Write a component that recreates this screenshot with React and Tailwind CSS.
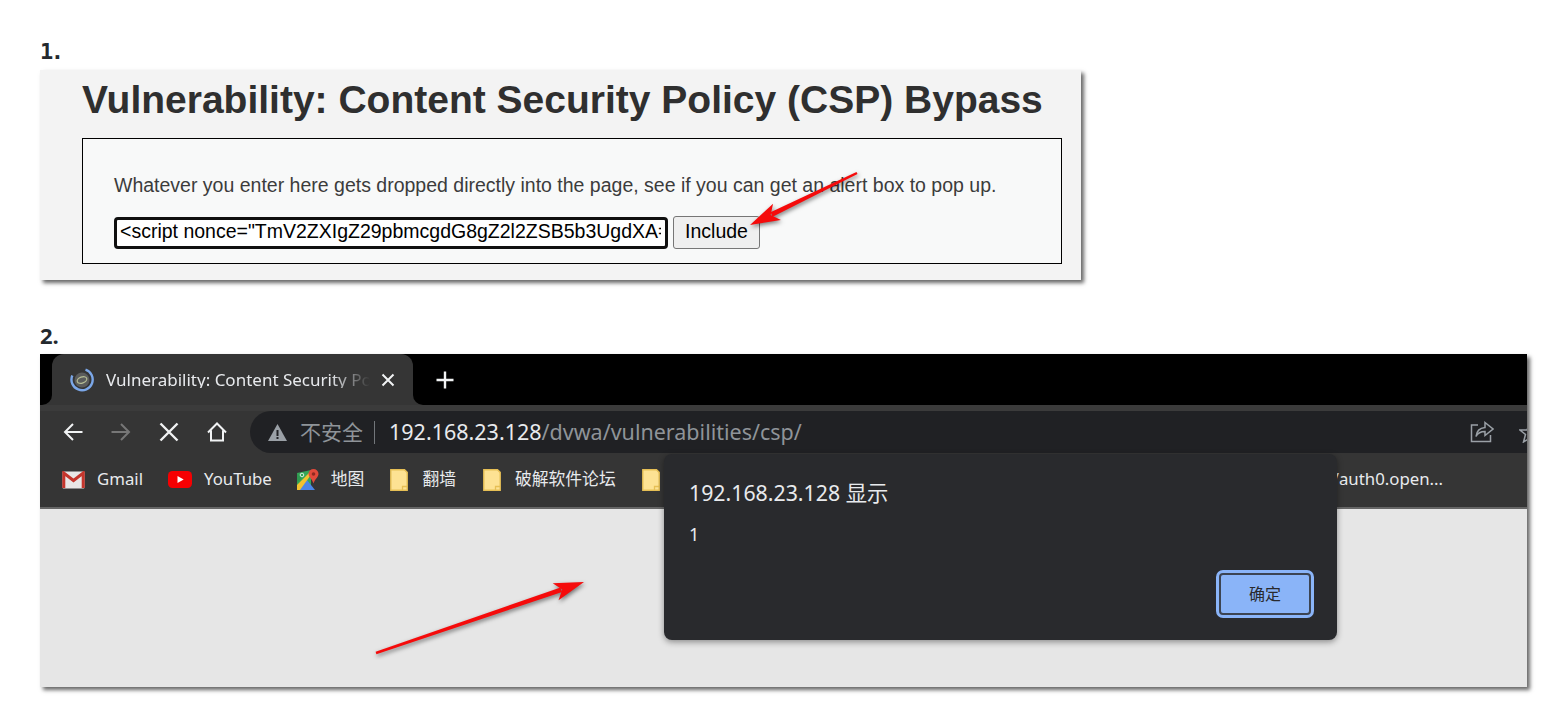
const CJK = "font-['Noto_Sans','Noto_Sans_CJK_SC',sans-serif]";

function Folder() {
  return (
    <svg width="18" height="22" viewBox="0 0 18 22" className="shrink-0">
      <path d="M.8 .8h13.700l2.700 2.600v17.800H.8z" fill="#fde293" stroke="#e6bf55" strokeWidth="1.400" />
      <path d="M12.500 21v-3.500h4.500" fill="none" stroke="#e6bf55" strokeWidth="1.300" />
    </svg>
  );
}

function Gmail() {
  return (
    <svg width="23" height="18" viewBox="0 0 23 18" className="shrink-0">
      <rect x="0.5" y="0.5" width="22" height="17" rx="1" fill="#e8e6e6" />
      <path d="M1.800 17V2l9.700 7.500L21.200 2v15" fill="none" stroke="#c5352c" strokeWidth="3" />
    </svg>
  );
}

function YouTube() {
  return (
    <svg width="24" height="17" viewBox="0 0 24 17" className="shrink-0">
      <rect width="24" height="17" rx="4.500" fill="#f60002" />
      <path d="M9.500 5l6.200 3.500-6.200 3.500z" fill="#fff" />
    </svg>
  );
}

function Maps() {
  return (
    <svg width="22" height="22" viewBox="0 0 22 22" className="shrink-0">
      <path d="M0 4l14-3v20H0z" fill="#36a558" />
      <path d="M0 21l10-10 8 10z" fill="#4b86e8" />
      <path d="M0 16L13 3h3L3 21H0z" fill="#f2c230" />
      <path d="M0 4l5 5-5 5z" fill="#2f9a50" />
      <circle cx="5" cy="6" r="1.800" fill="none" stroke="#d9efe0" strokeWidth="1" />
      <path d="M16.500 0a5 5 0 0 1 5 5c0 3-3.600 5-5 9.500C15.200 10 11.500 8 11.500 5a5 5 0 0 1 5-5z" fill="#e04a3b" />
      <circle cx="16.500" cy="5" r="1.800" fill="#8f2a22" />
    </svg>
  );
}

function Favicon() {
  return (
    <svg width="24" height="24" viewBox="0 0 24 24" className="shrink-0">
      <circle cx="12" cy="12" r="7.500" fill="#5b5c5c" />
      <ellipse cx="12" cy="12" rx="5" ry="3" fill="none" stroke="#b6bd94" strokeWidth="1.200" transform="rotate(-20 12 12)" />
      <path d="M15.500 1.600A10.600 10.600 0 1 1 2.300 7.500" fill="none" stroke="#7ba7e8" strokeWidth="2.400" />
    </svg>
  );
}

function Bookmark({ icon, label, gap = "gap-[12px]", className = "" }) {
  return (
    <div className={`flex items-center ${gap} ${className}`}>
      {icon}
      <span className="text-[16.800px] leading-none text-[#e8eaed] whitespace-nowrap">{label}</span>
    </div>
  );
}

function Arrow({ className, width, height, from, to }) {
  const dx = to[0] - from[0];
  const dy = to[1] - from[1];
  const l = Math.hypot(dx, dy);
  const ux = dx / l;
  const uy = dy / l;
  const bx = to[0] - ux * 30;
  const by = to[1] - uy * 30;
  const head = `${to[0]},${to[1]} ${bx - uy * 9},${by + ux * 9} ${to[0] - ux * 23},${to[1] - uy * 23} ${bx + uy * 9},${by - ux * 9}`;
  const tail = `${from[0] - uy * 1.200},${from[1] + ux * 1.200} ${to[0] - ux * 24 - uy * 2.400},${to[1] - uy * 24 + ux * 2.400} ${to[0] - ux * 24 + uy * 2.400},${to[1] - uy * 24 - ux * 2.400} ${from[0] + uy * 1.200},${from[1] - ux * 1.200}`;
  return (
    <svg width={width} height={height} className={`absolute pointer-events-none ${className}`}>
      <g className="drop-shadow-[1px_2px_2px_rgba(0,0,0,0.5)]">
        <polygon points={tail} fill="#f50b0b" />
        <polygon points={head} fill="#f50b0b" />
      </g>
    </svg>
  );
}

export default function App() {
  return (
    <div className="relative h-[728px] w-[1567px] overflow-hidden bg-white pl-10 pt-[40px]">
      <div className="h-[30px] font-['DejaVu_Sans_Mono',monospace] text-[22px] font-bold leading-[24px] tracking-[-2.500px] text-[#24292e]">1.</div>

      <section className="relative h-[210px] w-[1041px] bg-[#f3f3f3] pl-[42px] pt-[6px] shadow-[3px_3px_4px_rgba(0,0,0,0.6)] font-['Liberation_Sans',sans-serif]">
        <h1 className="h-[62px] text-[39px] font-bold leading-[48px] text-[#2f2f2f] whitespace-nowrap">
          Vulnerability: Content Security Policy (CSP) Bypass
        </h1>
        <div className="h-[126px] w-[980px] border border-black bg-[#f8f9f9] pl-[31px] pt-[33px]">
          <p className="text-[19.500px] leading-[26px] text-[#3c3c3c] whitespace-nowrap">
            Whatever you enter here gets dropped directly into the page, see if you can get an alert box to pop up.
          </p>
          <div className="mt-[18px] flex items-start gap-[5px]">
            <div className="mt-[1px] h-[32px] w-[554px] rounded-[4px] border-[3px] border-[#101010] bg-white pl-[3px] pr-[4px]">
              <div className="overflow-hidden whitespace-nowrap text-[19.500px] leading-[23px] text-black">
                {'<script nonce="TmV2ZXIgZ29pbmcgdG8gZ2l2ZSB5b3UgdXA=">alert(1)</script>'}
              </div>
            </div>
            <button className="h-[33px] w-[87px] rounded-[3px] border border-[#767676] bg-[#efefef] pb-[3px] text-[19.500px] leading-[26px] text-black">
              Include
            </button>
          </div>
        </div>
      </section>

      <div className="mt-[42px] h-[32px] font-['Open_Sans',sans-serif] text-[22px] font-bold leading-[26px] text-[#24292e]">2.</div>

      <section className={`relative h-[333px] w-[1487px] overflow-hidden bg-[#e6e6e6] shadow-[3px_3px_4px_rgba(0,0,0,0.6)] ${CJK}`}>
        <div className="flex h-[51px] bg-[#353535]">
          <div className="w-3 rounded-br-[10px] bg-black" />
          <div className="bg-black">
            <div className="flex h-[51px] w-[361px] items-center rounded-t-[12px] bg-[#353535] pl-[18px] pr-[16px]">
              <Favicon />
              <span className="ml-[12px] w-[264px] overflow-hidden whitespace-nowrap text-[17px] leading-none text-[#e8eaed] [mask-image:linear-gradient(to_right,black_85%,transparent)]">
                Vulnerability: Content Security Policy (CSP) Bypass
              </span>
              <svg width="14" height="14" viewBox="0 0 14 14" className="ml-[11px] shrink-0">
                <path d="M1.500 1.500l11 11M12.500 1.500l-11 11" stroke="#f1f3f4" strokeWidth="2" />
              </svg>
            </div>
          </div>
          <div className="flex flex-1 items-center rounded-bl-[10px] bg-black pl-[23px]">
            <svg width="18" height="18" viewBox="0 0 18 18">
              <path d="M9 .500v17M.500 9h17" stroke="#f1f3f4" strokeWidth="2.400" />
            </svg>
          </div>
        </div>

        <div className="h-[6px] bg-[#3b3b3b]" />
        <div className="flex h-[42px] bg-[#353535]">
          <div className="flex w-[210px] shrink-0 items-center pl-[23px]">
            <svg width="20" height="20" viewBox="0 0 20 20">
              <path d="M19.500 10H2M10 2l-8 8 8 8" fill="none" stroke="#f1f3f4" strokeWidth="2" />
            </svg>
            <svg width="20" height="20" viewBox="0 0 20 20" className="ml-[28px]">
              <path d="M.500 10H18M10 2l8 8-8 8" fill="none" stroke="#777" strokeWidth="2" />
            </svg>
            <svg width="20" height="20" viewBox="0 0 20 20" className="ml-[28px]">
              <path d="M1.500 1.500l17 17M18.500 1.500l-17 17" stroke="#f1f3f4" strokeWidth="2.400" />
            </svg>
            <svg width="20" height="20" viewBox="0 0 20 20" className="ml-[28px]">
              <path d="M1 10.500L10 1.500l9 9M4 8.500V18.500h12V8.500" fill="none" stroke="#f1f3f4" strokeWidth="2" />
            </svg>
          </div>
          <div className="flex h-[42px] flex-1 items-center rounded-l-[21px] bg-[#202124] pl-[18px]">
            <svg width="19" height="17" viewBox="0 0 19 17" className="shrink-0">
              <path d="M9.500 0L19 17H0z" fill="#9aa0a6" />
              <path d="M8.500 6h2v6h-2zM8.500 13h2v2h-2z" fill="#202124" />
            </svg>
            <span className="ml-[13px] text-[21px] leading-none text-[#8f9499]">不安全</span>
            <span className="ml-[11px] h-[23px] w-px bg-[#72767a]" />
            <span className="ml-[14px] text-[21.500px] leading-none text-[#e8eaed] whitespace-nowrap">
              192.168.23.128<span className="text-[#8f9499]">/dvwa/vulnerabilities/csp/</span>
            </span>
            <svg width="24" height="22" viewBox="0 0 24 22" className="ml-auto mr-[1px] shrink-0">
              <path d="M8 4H1.500v16.500h19V14" fill="none" stroke="#9aa0a6" strokeWidth="1.500" />
              <path d="M15 1.500l8 6.500-8 6.500v-4c-4 0-7 1-9 5 .5-5 3.500-8.500 9-9z" fill="none" stroke="#9aa0a6" strokeWidth="1.500" />
            </svg>
            <svg width="22" height="22" viewBox="0 0 22 22" className="ml-[24px] mr-[-14px] shrink-0">
              <path d="M11 2l3 7h7l-5.500 4.500 2 7.500L11 17l-6.500 4 2-7.500L1 9h7z" fill="none" stroke="#9aa0a6" strokeWidth="1.500" />
            </svg>
          </div>
        </div>

        <div className="flex h-[54px] items-center bg-[#353535] pb-[1px] pl-[22px]">
          <Bookmark icon={<Gmail />} label="Gmail" />
          <Bookmark icon={<YouTube />} label="YouTube" className="ml-[25px]" />
          <Bookmark icon={<Maps />} label="地图" className="ml-[25px]" />
          <Bookmark icon={<Folder />} label="翻墙" gap="gap-[14px]" className="ml-[26px]" />
          <Bookmark icon={<Folder />} label="破解软件论坛" gap="gap-[14px]" className="ml-[27px]" />
          <div className="ml-[26px]"><Folder /></div>
          <span className="ml-[673px] whitespace-nowrap text-[16.800px] leading-none text-[#e8eaed]">/auth0.open...</span>
        </div>
        <div className="h-[2px] bg-[#666]" />

        <div className="absolute left-[624px] top-[100px] h-[186px] w-[673px] rounded-[8px] bg-[#292a2d] pl-[25px] pr-[23px] pt-[27px] shadow-[0_2px_6px_rgba(0,0,0,0.4)]">
          <div className="text-[21.300px] leading-[24px] text-[#e8eaed]">192.168.23.128 显示</div>
          <div className="mt-[17px] text-[18px] leading-[24px] text-[#e8eaed]">1</div>
          <div className="mt-[24px] flex justify-end">
            <button className="h-[48px] w-[98px] rounded-[7px] border-[3px] border-[#8ab4f8] bg-[#8ab4f8] text-[16px] text-[#292a2d] outline outline-2 -outline-offset-[5px] outline-[#3c4453]">
              确定
            </button>
          </div>
        </div>
      </section>

      <Arrow className="left-[740px] top-[165px]" width="125" height="70" from={[117, 8]} to={[10, 60]} />
      <Arrow className="left-[370px] top-[575px]" width="220" height="85" from={[6, 78]} to={[214, 7]} />
    </div>
  );
}
